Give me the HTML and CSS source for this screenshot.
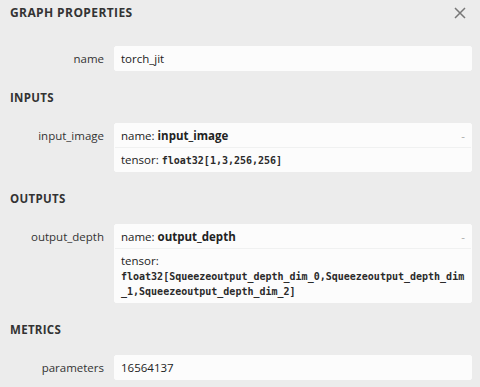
FILE: index.html
```html
<!DOCTYPE html>
<html lang="en">
<head>
  <meta charset="UTF-8" />
  <title>Graph Properties</title>
  <link rel="stylesheet" href="styles.css">
</head>
<body>
  <div class="sidebar">
    <div class="sidebar-title">
      <span>GRAPH PROPERTIES</span>
      <svg class="close" width="12" height="12" viewBox="0 0 12 12">
        <path d="M1 1 L11 11 M11 1 L1 11" stroke="#777" stroke-width="1.5" fill="none"/>
      </svg>
    </div>

    <div class="content">
      <div class="item first">
        <div class="item-name">name</div>
        <div class="item-value">
          <div class="line">torch_jit</div>
        </div>
      </div>

      <div class="section-title">INPUTS</div>
      <div class="item">
        <div class="item-name">input_image</div>
        <div class="item-value">
          <span class="expander">-</span>
          <div class="line">name: <b>input_image</b></div>
          <div class="line border">tensor: <code>float32[1,3,256,256]</code></div>
        </div>
      </div>

      <div class="section-title">OUTPUTS</div>
      <div class="item">
        <div class="item-name">output_depth</div>
        <div class="item-value">
          <span class="expander">-</span>
          <div class="line">name: <b>output_depth</b></div>
          <div class="line border">tensor:<br><code>float32[Squeezeoutput_depth_dim_0,Squeezeoutput_depth_dim_1,Squeezeoutput_depth_dim_2]</code></div>
        </div>
      </div>

      <div class="section-title">METRICS</div>
      <div class="item">
        <div class="item-name">parameters</div>
        <div class="item-value">
          <div class="line">16564137</div>
        </div>
      </div>
    </div>
  </div>
</body>
</html>
```

FILE: styles.css
```css
body {
  margin: 0;
  background: #ececec;
  font-family: "Open Sans", "Noto Sans", Arial, sans-serif;
  font-size: 11.5px;
  color: #222;
}
.sidebar {
  width: 480px;
  height: 387px;
  overflow: hidden;
}
.sidebar-title {
  display: flex;
  justify-content: space-between;
  align-items: center;
  padding: 5px 14px 0 10px;
  height: 15px;
  font-weight: bold;
  font-size: 12px;
  letter-spacing: 0.4px;
  color: #333;
}
.close {
  display: block;
}
.content {
  padding: 0 8px 0 10px;
}
.item {
  display: flex;
}
.item.first {
  margin-top: 26px;
}
.item-name {
  width: 94px;
  padding-right: 10px;
  padding-top: 5px;
  line-height: 15px;
  text-align: right;
  color: #333;
  flex-shrink: 0;
}
.item-value {
  flex: 1;
  background: #fcfcfc;
  border: 1px solid #fcfcfc;
  border-radius: 2px;
  line-height: 15px;
  min-width: 0;
}
.line {
  padding: 4px 6px;
  height: auto;
}
.line.border {
  border-top: 1px solid rgba(27, 31, 35, 0.05);
}
.expander {
  float: right;
  padding: 4px 6px;
  color: #aaa;
}
b {
  line-height: 1;
}
code {
  font-family: "DejaVu Sans Mono", "Liberation Mono", monospace;
  font-size: 10px;
  line-height: 1;
  font-weight: bold;
  color: #2a2a2a;
  word-break: break-all;
}
.section-title {
  margin: 19px 0 18px;
  line-height: 15px;
  font-weight: bold;
  font-size: 11.5px;
  letter-spacing: 0.3px;
  color: #333;
}
```
